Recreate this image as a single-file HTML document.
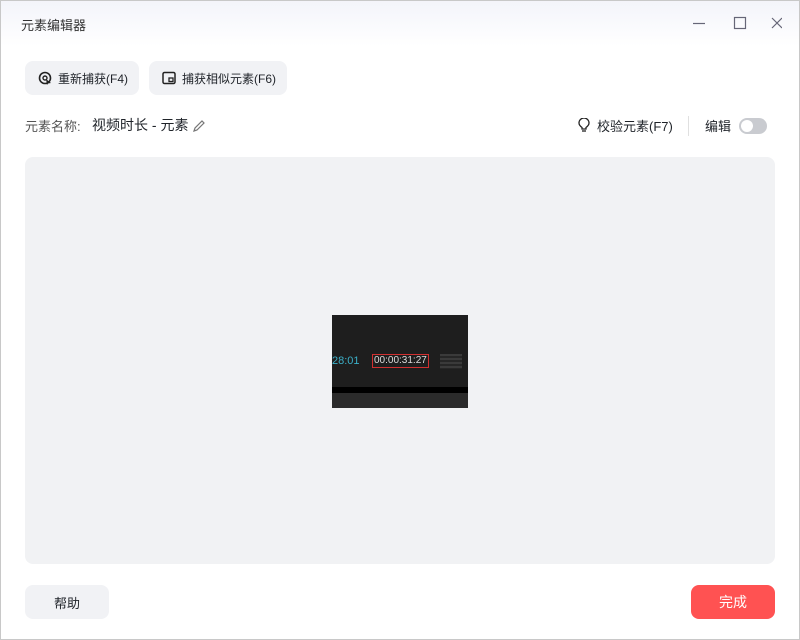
<!DOCTYPE html>
<html><head><meta charset="utf-8"><style>
*{box-sizing:border-box;margin:0;padding:0}
body{width:800px;height:640px;background:#fff;font-family:"Liberation Sans","Noto Sans CJK SC",sans-serif;color:#1f2329;position:relative;overflow:hidden}
.frame{position:absolute;inset:0;border:1px solid #c8c8c8}
.title{position:absolute;left:0;top:0;width:800px;height:46px;background:linear-gradient(#f3f4fa,#fff);}
.title span{position:absolute;left:21px;top:15px;font-size:13px;color:#333}
.btn{position:absolute;top:61px;height:34px;background:#f1f2f5;border-radius:8px;font-size:12px;display:flex;align-items:center;padding-left:13px;color:#1f2329}
.btn svg{margin-right:6px}
.lbl{position:absolute;font-size:13px}
.canvas{position:absolute;left:25px;top:157px;width:750px;height:407px;background:#f1f2f4;border-radius:8px}
.shot{position:absolute;left:332px;top:315px;width:136px;height:93px;background:#1e1e1e}
</style></head><body>
<div class="title"><span>元素编辑器</span>
<svg style="position:absolute;left:692px;top:16px" width="90" height="16"><path d="M1 7.5H13" stroke="#667" stroke-width="1.2"/><rect x="42.5" y="1.5" width="11" height="11" fill="none" stroke="#667" stroke-width="1.2"/><path d="M82 2L92 12M92 2L82 12" stroke="#667" stroke-width="1.2" transform="translate(-2,0)"/></svg>
</div>
<div class="btn" style="left:25px;width:114px"><svg width="14" height="14" viewBox="0 0 14 14"><circle cx="7" cy="7" r="5.5" fill="none" stroke="#222" stroke-width="1.6"/><circle cx="7" cy="7" r="2" fill="none" stroke="#222" stroke-width="1.4"/><path d="M8 8L13 12L10 12.5L9 14Z" fill="#222"/></svg>重新捕获(F4)</div>
<div class="btn" style="left:149px;width:138px"><svg width="14" height="14" viewBox="0 0 14 14"><rect x="1" y="1.5" width="12" height="11" rx="1.5" fill="none" stroke="#222" stroke-width="1.5"/><rect x="7" y="7" width="4" height="3.5" fill="none" stroke="#222" stroke-width="1.3"/></svg>捕获相似元素(F6)</div>
<div class="lbl" style="left:25px;top:116px;color:#555">元素名称:</div>
<div class="lbl" style="left:92px;top:115px;font-size:14px">视频时长 - 元素</div>
<svg style="position:absolute;left:192px;top:119px" width="14" height="14" viewBox="0 0 14 14"><path d="M2 12L3 9L10 2L12 4L5 11Z" fill="none" stroke="#777" stroke-width="1.2"/></svg>
<svg style="position:absolute;left:578px;top:118px" width="12" height="15" viewBox="0 0 12 15"><path d="M4 11V9.5C2 8 1 6.5 1 5A5 5 0 0 1 11 5C11 6.5 10 8 8 9.5V11Z" fill="none" stroke="#222" stroke-width="1.3"/><path d="M4 13H8" stroke="#222" stroke-width="1.3"/></svg>
<div class="lbl" style="left:597px;top:116px">校验元素(F7)</div>
<div style="position:absolute;left:688px;top:116px;width:1px;height:20px;background:#e0e0e0"></div>
<div class="lbl" style="left:705px;top:116px">编辑</div>
<div style="position:absolute;left:739px;top:118px;width:28px;height:16px;border-radius:8px;background:#c9cbd0"><div style="position:absolute;left:2px;top:2px;width:12px;height:12px;border-radius:6px;background:#fff"></div></div>
<div class="canvas"></div>
<div class="shot">
<div style="position:absolute;left:0;top:40px;font-size:11px;color:#3bb0c8">28:01</div>
<div style="position:absolute;left:40px;top:39px;width:57px;height:14px;border:1px solid #d03030;font-size:10px;color:#ddd;line-height:12px;padding-left:1px">00:00:31:27</div>
<div style="position:absolute;left:108px;top:39px;width:22px;height:15px;background:repeating-linear-gradient(#3a3a3a 0 2px,#262626 2px 4px)"></div>
<div style="position:absolute;left:0;top:72px;width:136px;height:6px;background:#000"></div>
<div style="position:absolute;left:0;top:78px;width:136px;height:15px;background:#2b2b2b"></div>
</div>
<div class="btn" style="left:25px;top:585px;width:84px;justify-content:center;padding:0;font-size:13px">帮助</div>
<div class="btn" style="left:691px;top:585px;width:84px;justify-content:center;padding:0;background:#ff5252;color:#fff;font-size:14px">完成</div>
<div class="frame"></div>
</body></html>
